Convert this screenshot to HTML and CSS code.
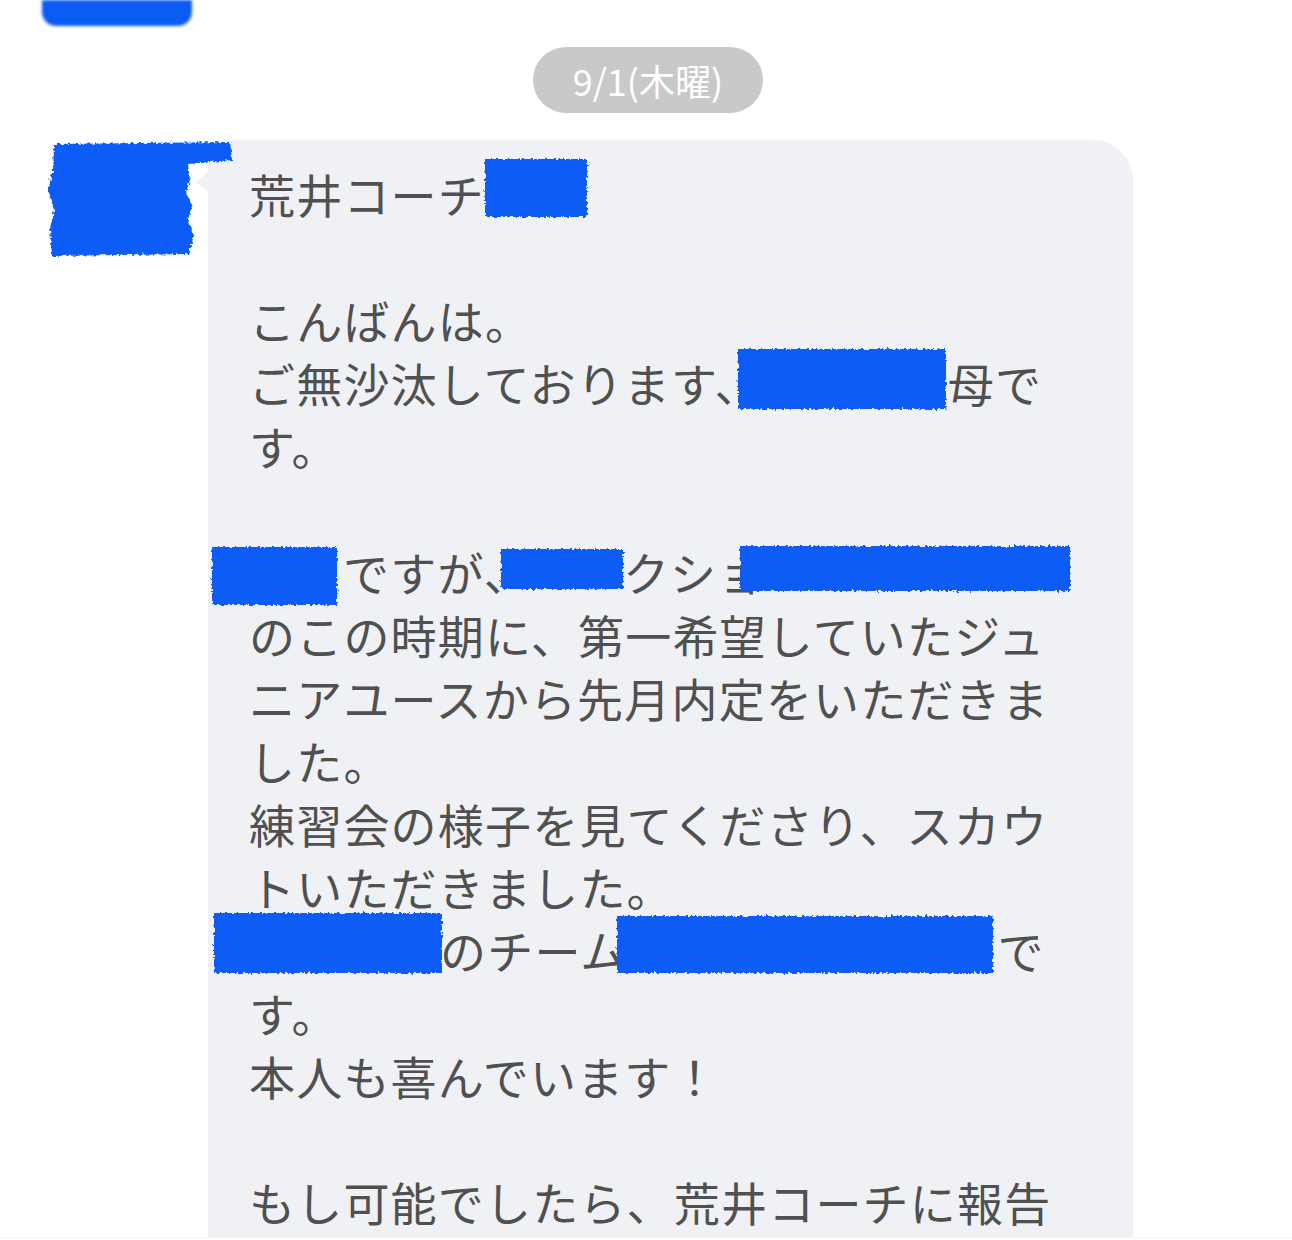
FILE: index.html
```html
<!DOCTYPE html>
<html lang="ja">
<head>
    <meta charset="UTF-8">
    <meta name="viewport" content="width=device-width, initial-scale=1.0">
    <title>トーク</title>
    <link rel="stylesheet" href="styles.css">
</head>
<body>
    <svg class="defs" width="0" height="0">
        <filter id="rough">
            <feTurbulence type="fractalNoise" baseFrequency="0.35" numOctaves="2" seed="3" result="noise"/>
            <feDisplacementMap in="SourceGraphic" in2="noise" scale="5"/>
        </filter>
    </svg>

    <div class="screen">
        <div class="prev-scribble"></div>

        <div class="date-row">
            <div class="date-pill">9/1(木曜)</div>
        </div>

        <div class="msg-row">
            <div class="avatar">
                <svg width="190" height="118" viewBox="0 0 190 118">
                    <path class="scribble" d="M6 4 L182 2 L184 20 L140 24 L142 40 L138 52 L144 66 L140 80 L146 96 L140 114 L4 116 L2 88 L6 70 L0 50 L5 30 Z"/>
                </svg>
            </div>
            <div class="bubble">
                <div class="text">荒井コーチ<span class="redact r-name"></span><br>
<br>
こんばんは。<br>
ご無沙汰しております、<span class="redact r-child"></span>母で<br>
す。<br>
<br>
<span class="redact r-lead"></span>ですが、<span class="redact r-small"></span>クショ<span class="redact r-long"></span><br>
のこの時期に、第一希望していたジュ<br>
ニアユースから先月内定をいただきま<br>
した。<br>
練習会の様子を見てくださり、スカウ<br>
トいただきました。<br>
<span class="redact r-place"></span>のチーム<span class="redact r-team"></span>で<br>
す。<br>
本人も喜んでいます！<br>
<br>
もし可能でしたら、荒井コーチに報告</div>
            </div>
        </div>
    </div>
</body>
</html>
```

FILE: styles.css
```css
body {
    margin: 0;
    background-color: #fff;
    font-family: "Noto Sans CJK JP", "Noto Sans", sans-serif;
}
.defs {
    position: absolute;
}
.screen {
    height: 1237px;
    overflow: hidden;
    border-bottom: 1px solid #f2f2f2;
}
.prev-scribble {
    width: 150px;
    height: 26px;
    margin-left: 42px;
    background-color: #0b5cf5;
    border-radius: 0 0 14px 14px;
    filter: blur(1.5px);
}
.date-row {
    display: flex;
    justify-content: center;
    margin-top: 21px;
}
.date-pill {
    width: 230px;
    height: 66px;
    line-height: 66px;
    margin-left: 4px;
    text-align: center;
    background-color: #c9c9c9;
    color: #fff;
    border-radius: 33px;
    font-size: 36px;
}
.msg-row {
    display: flex;
    margin-top: 27px;
    padding-left: 48px;
}
.avatar {
    position: relative;
    z-index: 1;
    width: 160px;
    flex-shrink: 0;
}
.avatar svg {
    overflow: visible;
    filter: url(#rough);
}
.scribble {
    fill: #0b5cf5;
}
.bubble {
    position: relative;
    width: 884px;
    min-height: 1200px;
    padding: 22px 0 0 41px;
    background-color: #eff1f4;
    border-radius: 22px 40px 0 0;
}
.bubble::before {
    content: "";
    position: absolute;
    left: -12px;
    top: 32px;
    border-top: 10px solid transparent;
    border-bottom: 10px solid transparent;
    border-right: 12px solid #eff1f4;
}
.text {
    font-size: 46px;
    line-height: 63px;
    letter-spacing: 1.2px;
    color: #505050;
    white-space: nowrap;
}
.redact {
    display: inline-block;
    vertical-align: top;
    background-color: #0b5cf5;
    filter: url(#rough);
    position: relative;
}
.r-name {
    width: 102px;
    height: 58px;
    top: -3px;
}
.r-child {
    width: 208px;
    height: 60px;
    margin-left: -24px;
    margin-right: 2px;
    top: -2px;
}
.r-lead {
    width: 125px;
    height: 58px;
    margin-left: -37px;
    margin-right: 6px;
    top: 7px;
}
.r-small {
    width: 122px;
    height: 40px;
    margin-left: -30px;
    top: 9px;
}
.r-long {
    width: 330px;
    height: 45px;
    margin-left: -25px;
    top: 6px;
}
.r-place {
    width: 228px;
    height: 60px;
    margin-left: -35px;
    margin-right: -2px;
    top: -5px;
}
.r-team {
    width: 376px;
    height: 57px;
    margin-left: -10px;
    margin-right: 4px;
    top: -2px;
}
```
